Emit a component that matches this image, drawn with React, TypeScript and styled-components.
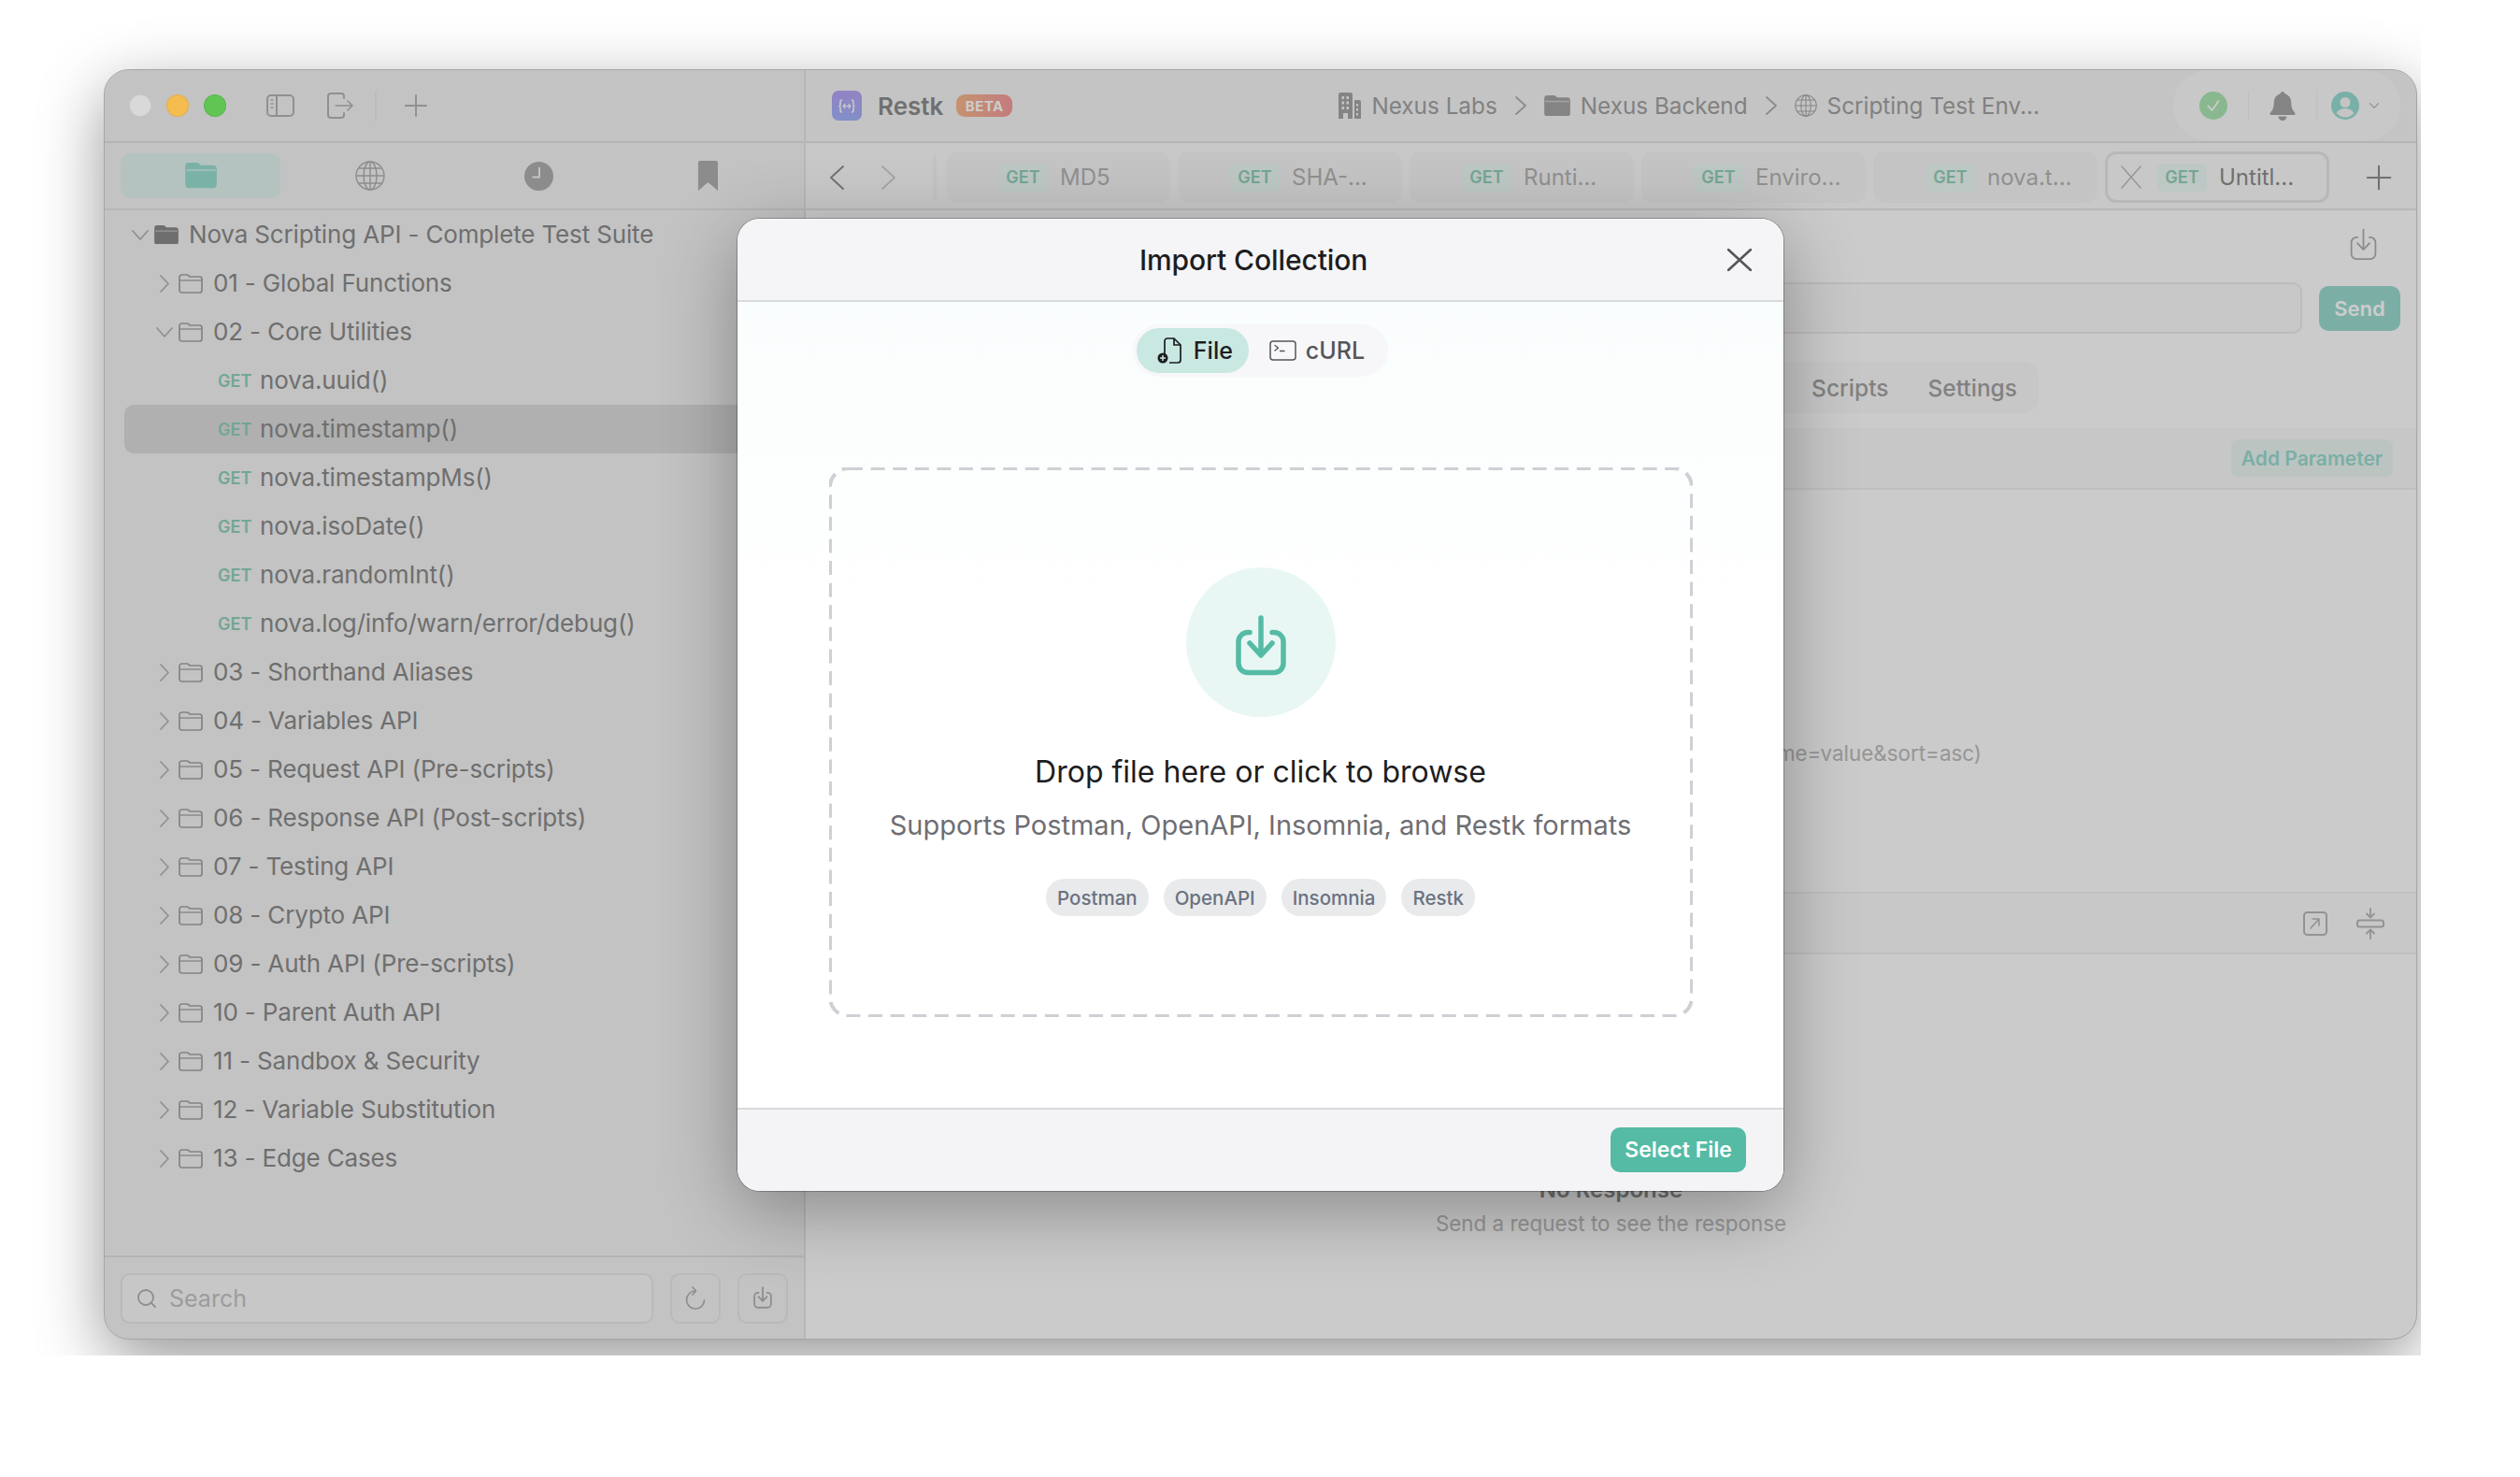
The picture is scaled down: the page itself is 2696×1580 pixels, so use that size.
import styled, { createGlobalStyle } from "styled-components";
import { ChevronDown, Plus, Search } from "lucide-react";

const GlobalStyle = createGlobalStyle`
  html, body {
    margin: 0;
    background: #fff;
  }
  * {
    box-sizing: border-box;
  }
  body {
    font-family: Inter, "Noto Sans", sans-serif;
    -webkit-font-smoothing: antialiased;
  }
`;

type IconProps = { size?: number };
type GlyphProps = { w: number; h: number; weight?: number };

const ChevronGlyph = ({ w, h, weight = 1.8, dir }: GlyphProps & { dir: "left" | "right" | "down" }) => {
  const d =
    dir === "left"
      ? `M${w - 1} 1L1 ${h / 2}L${w - 1} ${h - 1}`
      : dir === "right"
        ? `M1 1L${w - 1} ${h / 2}L1 ${h - 1}`
        : `M1 1L${w / 2} ${h - 1}L${w - 1} 1`;
  return (
    <svg width={w} height={h} viewBox={`0 0 ${w} ${h}`} fill="none" stroke="currentColor" strokeWidth={weight} strokeLinecap="round" strokeLinejoin="round">
      <path d={d} />
    </svg>
  );
};

const XGlyph = ({ w, h, weight = 2 }: GlyphProps) => (
  <svg width={w} height={h} viewBox={`0 0 ${w} ${h}`} fill="none" stroke="currentColor" strokeWidth={weight} strokeLinecap="round">
    <path d={`M1 1L${w - 1} ${h - 1}M${w - 1} 1L1 ${h - 1}`} />
  </svg>
);

const GlobeGlyph = ({ size = 32 }: IconProps) => (
  <svg width={size} height={size} viewBox="0 0 32 32" fill="none" stroke="currentColor" strokeWidth="1.4">
    <circle cx="16" cy="16" r="15" />
    <ellipse cx="16" cy="16" rx="7" ry="15" />
    <path d="M16 1v30M1 16h30M3.500 8h25M3.500 24h25" />
  </svg>
);

const SidebarIcon = () => (
  <svg width="30" height="24" viewBox="0 0 30 24" fill="none" stroke="currentColor" strokeWidth="2">
    <rect x="1" y="1" width="28" height="22" rx="4" />
    <path d="M11 1v22" />
    <path d="M4.500 6h3M4.500 10h3M4.500 14h3" strokeWidth="1.500" />
  </svg>
);

const ExitIcon = () => (
  <svg width="30" height="28" viewBox="0 0 30 28" fill="none" stroke="currentColor" strokeWidth="2" strokeLinecap="round" strokeLinejoin="round">
    <path d="M19 6V4a3 3 0 0 0-3-3H5a3 3 0 0 0-3 3v20a3 3 0 0 0 3 3h11a3 3 0 0 0 3-3v-2" />
    <path d="M10 14h18M23 9l5 5-5 5" strokeWidth="1.600" />
  </svg>
);

const FolderFill = ({ size = 26 }: IconProps) => (
  <svg width={size} height={size * 0.8} viewBox="0 0 26 21" fill="currentColor">
    <path d="M3 0h6.500c1 0 1.600.4 2.200 1l1.200 1.200H23a3 3 0 0 1 3 3V18a3 3 0 0 1-3 3H3a3 3 0 0 1-3-3V3a3 3 0 0 1 3-3z" />
    <path d="M1 6.200h24" stroke="#fff" strokeOpacity=".45" strokeWidth="1.400" />
  </svg>
);

const FolderLine = () => (
  <svg width="26" height="21" viewBox="0 0 26 21" fill="none" stroke="currentColor" strokeWidth="1.700" strokeLinejoin="round">
    <path d="M3.500 1h5.600c.8 0 1.300.3 1.800.8l1 1.200h10.600A2.500 2.500 0 0 1 25 5.500v12a2.500 2.500 0 0 1-2.500 2.500h-19A2.500 2.500 0 0 1 1 17.500v-14A2.500 2.500 0 0 1 3.500 1z" />
    <path d="M1.500 7h23" strokeWidth="1.300" />
  </svg>
);

const ClockFill = () => (
  <svg width="31" height="31" viewBox="0 0 31 31">
    <circle cx="15.500" cy="15.500" r="15.500" fill="currentColor" />
    <path d="M16 6v10.500H8.500" fill="none" stroke="#f4f4f4" strokeWidth="2" />
  </svg>
);

const BookmarkFill = () => (
  <svg width="21" height="32" viewBox="0 0 21 32" fill="currentColor">
    <path d="M2 0h17a2 2 0 0 1 2 2v30l-10.500-9L0 32V2a2 2 0 0 1 2-2z" />
  </svg>
);

const BuildingIcon = () => (
  <svg width="24" height="28" viewBox="0 0 24 28" fill="currentColor">
    <path fillRule="evenodd" d="M2 0h11a2 2 0 0 1 2 2v26H0V2a2 2 0 0 1 2-2zm1.500 4v3H6V4zm5 0v3H11V4zm-5 5.500v3H6v-3zm5 0v3H11v-3zm-5 5.500v3H6v-3zm5 0v3H11v-3zM5 22v6h5v-6z" />
    <path fillRule="evenodd" d="M17 8h5a2 2 0 0 1 2 2v18h-7zm2 4v2.500h2V12zm0 5v2.500h2V17zm0 5v2.500h2V22z" />
  </svg>
);

const ImportIcon = ({ size = 30, weight = 2 }: IconProps & { weight?: number }) => (
  <svg width={size} height={(size * 65) / 54} viewBox="0 0 54 65" fill="none" stroke="currentColor" strokeWidth={weight * (54 / size)} strokeLinecap="round" strokeLinejoin="round">
    <path d="M15 18.500h-2a10 10 0 0 0-10 10v23a10 10 0 0 0 10 10h28a10 10 0 0 0 10-10v-23a10 10 0 0 0-10-10h-2" />
    <path d="M27 3v40M15 30l12 13 12-13" />
  </svg>
);

const RefreshIcon = () => (
  <svg width="22" height="26" viewBox="0 0 22 26" fill="none" stroke="currentColor" strokeWidth="1.700" strokeLinecap="round" strokeLinejoin="round">
    <path d="M11 5A9.500 9.500 0 1 0 20.500 15" />
    <path d="M8 1l3.500 4L8 9" />
  </svg>
);

const FileIcon = () => (
  <svg width="26" height="28" viewBox="0 0 26 28" fill="none" stroke="currentColor" strokeWidth="1.700" strokeLinejoin="round">
    <path d="M8 18V4a3 3 0 0 1 3-3h7l7 7v16a3 3 0 0 1-3 3H13" />
    <path d="M18 1v7h7" />
    <circle cx="6" cy="22" r="5.500" fill="currentColor" stroke="none" />
    <path d="M6 19v6M3 22h6" stroke="#c9e8e2" strokeWidth="1.500" />
  </svg>
);

const TerminalIcon = () => (
  <svg width="29" height="22" viewBox="0 0 29 22" fill="none" stroke="currentColor" strokeWidth="1.500" strokeLinejoin="round">
    <rect x="1" y="1" width="27" height="20" rx="3" />
    <path d="M6 5.500l3.500 2.700L6 11M11.500 11.500H16" strokeWidth="1.300" strokeLinecap="round" />
  </svg>
);

const PopOutIcon = () => (
  <svg width="26" height="26" viewBox="0 0 26 26" fill="none" stroke="currentColor" strokeWidth="2" strokeLinecap="round" strokeLinejoin="round">
    <rect x="1" y="1" width="24" height="24" rx="3.500" />
    <path d="M8 18l9-10M10 8h7v7" strokeWidth="1.600" />
  </svg>
);

const CollapseIcon = () => (
  <svg width="30" height="34" viewBox="0 0 30 34" fill="none" stroke="currentColor" strokeWidth="1.800" strokeLinecap="round" strokeLinejoin="round">
    <rect x="1" y="13.500" width="28" height="7" rx="2.500" strokeWidth="2" />
    <path d="M15 1v9M11 6.500l4 4 4-4M15 33v-9M11 27.500l4-4 4 4" />
  </svg>
);

const BellFill = () => (
  <svg width="28" height="31" viewBox="0 0 28 31" fill="currentColor">
    <path d="M14 0c1.300 0 2.200 1 2.300 2.300C21 3.500 23.300 7.500 23.300 12c0 6 1.700 8 3.800 10.500.9 1 .4 2.500-1 2.500H1.900c-1.400 0-1.900-1.500-1-2.500C3 20 4.700 18 4.700 12c0-4.500 2.300-8.500 7-9.700C11.800 1 12.700 0 14 0z" />
    <path d="M9.500 26.500h9a4.500 4.500 0 0 1-9 0z" />
  </svg>
);

const CheckBadge = () => (
  <svg width="30" height="30" viewBox="0 0 30 30">
    <circle cx="15" cy="15" r="15" fill="#acE6b3" />
    <path d="M9.500 15.500l4 4.500 7-10" fill="none" stroke="#fff" strokeWidth="1.800" strokeLinecap="round" strokeLinejoin="round" />
  </svg>
);

const UserBadge = () => (
  <svg width="30" height="30" viewBox="0 0 30 30">
    <circle cx="15" cy="15" r="15" fill="#96dcd2" />
    <circle cx="15" cy="11.500" r="5.500" fill="#f5f5f5" />
    <path d="M5.500 23c2-3.600 5.500-5 9.500-5s7.500 1.400 9.500 5c-2.400 2.700-5.800 4.500-9.500 4.500S7.900 25.700 5.500 23z" fill="#f5f5f5" />
  </svg>
);

const LogoMark = () => (
  <svg width="18" height="15" viewBox="0 0 18 15" fill="none" stroke="#fff" strokeWidth="1.500" strokeLinecap="round" strokeLinejoin="round">
    <path d="M3.500 1C2 1 2 2 2 3.500v2C2 6.800 1.500 7.500 1 7.500c.5 0 1 .7 1 2v2C2 13 2 14 3.500 14M14.500 1C16 1 16 2 16 3.500v2c0 1.300.5 2 1 2-.5 0-1 .7-1 2v2c0 1.500 0 2.500-1.500 2.500" />
    <path d="M5.500 7.500h7M7 5.500l-1.800 2L7 9.500M11 5.500l1.800 2-1.800 2" strokeWidth="1.200" />
  </svg>
);

const treeGroupsAfter = [
  "03 - Shorthand Aliases",
  "04 - Variables API",
  "05 - Request API (Pre-scripts)",
  "06 - Response API (Post-scripts)",
  "07 - Testing API",
  "08 - Crypto API",
  "09 - Auth API (Pre-scripts)",
  "10 - Parent Auth API",
  "11 - Sandbox & Security",
  "12 - Variable Substitution",
  "13 - Edge Cases",
];

const coreRequests = [
  "nova.uuid()",
  "nova.timestamp()",
  "nova.timestampMs()",
  "nova.isoDate()",
  "nova.randomInt()",
  "nova.log/info/warn/error/debug()",
];

const openTabs = ["MD5", "SHA-...", "Runti...", "Enviro...", "nova.t..."];

const App = () => (
  <>
    <GlobalStyle />
    <Page>
      <Shot>
        <Window>
          <Sidebar>
            <SideTitle>
              <Lights>
                <Light $color="#d9d9d9" />
                <Light $color="#f5bd4f" />
                <Light $color="#61c554" />
              </Lights>
              <SideTools>
                <SidebarIcon />
                <ExitIcon />
                <ToolDivider />
                <Plus size={38} strokeWidth={1.2} />
              </SideTools>
            </SideTitle>
            <SideTabs>
              <SideTab $active>
                <FolderFill size={34} />
              </SideTab>
              <SideTab>
                <GlobeGlyph />
              </SideTab>
              <SideTab>
                <ClockFill />
              </SideTab>
              <SideTab>
                <BookmarkFill />
              </SideTab>
            </SideTabs>
            <Tree>
              <Row $depth={0}>
                <Caret><ChevronGlyph dir="down" w={18} h={11} /></Caret>
                <RootFolder><FolderFill /></RootFolder>
                <RowLabel>Nova Scripting API - Complete Test Suite</RowLabel>
              </Row>
              <Row $depth={1}>
                <Caret><ChevronGlyph dir="right" w={10} h={19} /></Caret>
                <FolderLine />
                <RowLabel>01 - Global Functions</RowLabel>
              </Row>
              <Row $depth={1}>
                <Caret><ChevronGlyph dir="down" w={18} h={11} /></Caret>
                <FolderLine />
                <RowLabel>02 - Core Utilities</RowLabel>
              </Row>
              {coreRequests.map((name) => (
                <RequestRow key={name} $selected={name === "nova.timestamp()"}>
                  <Method>GET</Method>
                  <RowLabel>{name}</RowLabel>
                </RequestRow>
              ))}
              {treeGroupsAfter.map((name) => (
                <Row key={name} $depth={1}>
                  <Caret><ChevronGlyph dir="right" w={10} h={19} /></Caret>
                  <FolderLine />
                  <RowLabel>{name}</RowLabel>
                </Row>
              ))}
            </Tree>
            <SideFooter>
              <SearchBox>
                <Search size={24} strokeWidth={1.8} />
                <span>Search</span>
              </SearchBox>
              <SquareButton><RefreshIcon /></SquareButton>
              <SquareButton><ImportIcon size={20} weight={1.8} /></SquareButton>
            </SideFooter>
          </Sidebar>

          <Main>
            <TitleBar>
              <Logo><LogoMark /></Logo>
              <Brand>Restk</Brand>
              <BetaBadge>BETA</BetaBadge>
              <Crumbs>
                <BuildingIcon />
                <Crumb>Nexus Labs</Crumb>
                <CrumbSep><ChevronGlyph dir="right" w={12} h={20} /></CrumbSep>
                <FolderFill size={28} />
                <Crumb>Nexus Backend</Crumb>
                <CrumbSep><ChevronGlyph dir="right" w={12} h={20} /></CrumbSep>
                <GlobeGlyph size={24} />
                <Crumb>Scripting Test Env...</Crumb>
              </Crumbs>
              <StatusPill>
                <CheckBadge />
                <PillDivider />
                <BellIcon><BellFill /></BellIcon>
                <PillDivider />
                <UserSlot>
                  <UserBadge />
                  <ChevronDown size={18} strokeWidth={1.6} />
                </UserSlot>
              </StatusPill>
            </TitleBar>

            <TabBar>
              <NavButton><ChevronGlyph dir="left" w={15} h={26} /></NavButton>
              <NavButton $muted><ChevronGlyph dir="right" w={15} h={26} /></NavButton>
              <TabEdge />
              <Tabs>
                {openTabs.map((name) => (
                  <Tab key={name}>
                    <TabClose />
                    <TabMethod>GET</TabMethod>
                    <TabName>{name}</TabName>
                  </Tab>
                ))}
                <Tab $active>
                  <TabClose><XGlyph w={22} h={25} weight={1.5} /></TabClose>
                  <TabMethod>GET</TabMethod>
                  <TabName $active>Untitl...</TabName>
                </Tab>
              </Tabs>
              <AddTab><Plus size={42} strokeWidth={1.2} /></AddTab>
            </TabBar>

            <RequestTools>
              <ImportIcon size={29} weight={1.8} />
            </RequestTools>
            <UrlRow>
              <UrlInput />
              <SendButton>Send</SendButton>
            </UrlRow>
            <SectionTabs>
              <SectionTab>Scripts</SectionTab>
              <SectionTab>Settings</SectionTab>
            </SectionTabs>
            <ParamsHeader>
              <AddButton>Add Parameter</AddButton>
            </ParamsHeader>
            <ParamsEmpty>
              <HintLine>me=value&amp;sort=asc)</HintLine>
            </ParamsEmpty>
            <ResponseHeader>
              <PopOutIcon />
              <CollapseIcon />
            </ResponseHeader>
            <ResponseEmpty>
              <EmptyTitle>No Response</EmptyTitle>
              <HintLine>Send a request to see the response</HintLine>
            </ResponseEmpty>
          </Main>

          <Scrim>
            <Modal>
              <ModalHeader>
                <ModalTitle>Import Collection</ModalTitle>
                <CloseButton><XGlyph w={26} h={24} weight={2.6} /></CloseButton>
              </ModalHeader>
              <ModalBody>
                <Segment>
                  <SegmentItem $active>
                    <FileIcon />
                    File
                  </SegmentItem>
                  <SegmentItem>
                    <TerminalIcon />
                    cURL
                  </SegmentItem>
                </Segment>
                <DropZone>
                  <DashOutline viewBox="0 0 924 588" aria-hidden="true">
                    <rect x="1" y="1" width="922" height="586" rx="20" />
                  </DashOutline>
                  <DropCircle><ImportIcon size={54} weight={5.5} /></DropCircle>
                  <DropTitle>Drop file here or click to browse</DropTitle>
                  <DropHint>Supports Postman, OpenAPI, Insomnia, and Restk formats</DropHint>
                  <Formats>
                    <Format>Postman</Format>
                    <Format>OpenAPI</Format>
                    <Format>Insomnia</Format>
                    <Format>Restk</Format>
                  </Formats>
                </DropZone>
              </ModalBody>
              <ModalFooter>
                <SelectButton>Select File</SelectButton>
              </ModalFooter>
            </Modal>
          </Scrim>
        </Window>
      </Shot>
    </Page>
  </>
);

const Page = styled.div`
  width: 2696px;
  height: 1580px;
  overflow: hidden;
  background: #fff;
`;

const Shot = styled.div`
  width: 2590px;
  height: 1450px;
  padding: 75px 5px 18px 112px;
  overflow: hidden;
  display: flex;
`;

const Window = styled.div`
  position: relative;
  flex: 1;
  display: grid;
  grid-template-columns: 750px 1fr;
  border-radius: 26px;
  overflow: hidden;
  background: #fefefe;
  outline: 1px solid #a6a6a6;
  box-shadow: 0 22px 70px rgba(0, 0, 0, 0.42);
`;

const Sidebar = styled.aside`
  display: flex;
  flex-direction: column;
  background: #f4f4f4;
  border-right: 2px solid #e5e5e5;
  min-height: 0;
`;

const SideTitle = styled.div`
  height: 78px;
  flex: none;
  display: flex;
  align-items: center;
  padding: 0 0 0 26px;
  border-bottom: 2px solid #e2e2e2;
`;

const Lights = styled.div`
  position: relative;
  z-index: 11;
  display: flex;
  gap: 16px;
`;

const Light = styled.span<{ $color: string }>`
  width: 24px;
  height: 24px;
  border-radius: 50%;
  background: ${(p) => p.$color};
  box-shadow: inset 0 0 0 1px rgba(0, 0, 0, 0.08);
`;

const SideTools = styled.div`
  display: flex;
  align-items: center;
  gap: 34px;
  margin-left: 43px;
  color: #b4b4b4;
`;

const ToolDivider = styled.span`
  width: 2px;
  height: 32px;
  margin: 0 -11px 0 -12px;
  background: #ebebeb;
`;

const SideTabs = styled.div`
  height: 72px;
  flex: none;
  display: grid;
  grid-template-columns: repeat(4, 171px);
  gap: 10px;
  align-items: center;
  padding: 0 17px;
  border-bottom: 2px solid #e5e5e5;
`;

const SideTab = styled.div<{ $active?: boolean }>`
  height: 48px;
  display: flex;
  align-items: center;
  justify-content: center;
  border-radius: 10px;
  background: ${(p) => (p.$active ? "#e3f4f0" : "transparent")};
  color: ${(p) => (p.$active ? "#9adfd2" : "#b0b0b0")};
`;

const Tree = styled.div`
  flex: 1;
  min-height: 0;
  padding: 0 21px;
`;

const Row = styled.div<{ $depth: number }>`
  height: 52px;
  display: flex;
  align-items: center;
  padding-left: ${(p) => p.$depth * 26 + 8}px;
  gap: 8px;
  color: #a4a4a4;
`;

const RequestRow = styled.div<{ $selected?: boolean }>`
  height: 52px;
  display: flex;
  align-items: center;
  padding-left: 100px;
  border-radius: 10px;
  background: ${(p) => (p.$selected ? "#dcdcdc" : "transparent")};
`;

const Caret = styled.span`
  width: 18px;
  margin-right: -2px;
  display: flex;
  justify-content: center;
  color: #b6b6b6;
`;

const RootFolder = styled.span`
  display: flex;
  color: #8a8a8a;
`;

const RowLabel = styled.span`
  font-size: 26px;
  line-height: 32px;
  letter-spacing: -0.15px;
  color: #8b8b8b;
  margin-left: 3px;
  white-space: nowrap;
`;

const Method = styled.span`
  width: 42px;
  font-size: 18px;
  font-weight: 600;
  color: #8fd0b9;
`;

const SideFooter = styled.div`
  height: 89px;
  flex: none;
  display: flex;
  align-items: center;
  gap: 18px;
  padding: 0 17px;
  border-top: 2px solid #e2e2e2;
`;

const SearchBox = styled.div`
  flex: 1;
  height: 54px;
  display: flex;
  align-items: center;
  gap: 12px;
  padding-left: 14px;
  border: 2px solid #e8e8e8;
  border-radius: 10px;
  background: #f9f9f9;
  color: #b2b2b2;
  font-size: 25px;
  span {
    color: #c4c4c4;
  }
`;

const SquareButton = styled.div`
  width: 54px;
  height: 54px;
  display: flex;
  align-items: center;
  justify-content: center;
  border: 2px solid #e8e8e8;
  border-radius: 10px;
  color: #b2b2b2;
`;

const Main = styled.main`
  display: flex;
  flex-direction: column;
  min-width: 0;
  min-height: 0;
`;

const TitleBar = styled.div`
  height: 78px;
  flex: none;
  display: flex;
  align-items: center;
  padding: 0 17px 0 28px;
  background: #f5f5f5;
  border-bottom: 2px solid #e2e2e2;
`;

const Logo = styled.span`
  width: 32px;
  height: 32px;
  display: flex;
  align-items: center;
  justify-content: center;
  border-radius: 7px;
  background: linear-gradient(180deg, #b9a4f5, #a2b4fb);
`;

const Brand = styled.span`
  margin-left: 17px;
  font-size: 26px;
  font-weight: 600;
  color: #8c8c8c;
`;

const BetaBadge = styled.span`
  margin-left: 14px;
  width: 60px;
  height: 24px;
  display: flex;
  align-items: center;
  justify-content: center;
  border-radius: 9px;
  background: linear-gradient(90deg, #f7b88a, #f59a9f);
  color: #fff;
  font-size: 15px;
  font-weight: 700;
  letter-spacing: 0.5px;
`;

const Crumbs = styled.div`
  display: flex;
  align-items: center;
  gap: 11px;
  margin: 0 143px 0 auto;
  color: #a6a6a6;
`;

const Crumb = styled.span`
  font-size: 24.3px;
  color: #a2a2a2;
  white-space: nowrap;
`;

const CrumbSep = styled.span`
  display: flex;
  margin: 0 8px;
  color: #b0b0b0;
`;

const StatusPill = styled.div`
  width: 243px;
  height: 76px;
  display: flex;
  align-items: center;
  gap: 22px;
  padding-left: 28px;
  border-radius: 38px;
  background: #fbfbfb;
  color: #b8b8b8;
`;

const PillDivider = styled.span`
  width: 1px;
  height: 32px;
  background: #efefef;
`;

const BellIcon = styled.span`
  display: flex;
  color: #a6a6a6;
`;

const UserSlot = styled.span`
  display: flex;
  align-items: center;
  gap: 7px;
  margin-left: -7px;
`;

const TabBar = styled.div`
  height: 72px;
  flex: none;
  display: flex;
  align-items: center;
  padding: 3px 0 0 6px;
  background: #fbfbfb;
  border-bottom: 2px solid #e6e6e6;
`;

const NavButton = styled.span<{ $muted?: boolean }>`
  width: 55px;
  display: flex;
  justify-content: center;
  color: ${(p) => (p.$muted ? "#cfcfcf" : "#8c8c8c")};
`;

const TabEdge = styled.span`
  width: 4px;
  height: 48px;
  margin: 0 10px 0 20px;
  background: #f4f4f4;
`;

const Tabs = styled.div`
  display: flex;
  gap: 8px;
`;

const Tab = styled.div<{ $active?: boolean }>`
  width: 240px;
  height: 55px;
  display: flex;
  align-items: center;
  padding-left: 14px;
  border-radius: 12px;
  background: ${(p) => (p.$active ? "#fbfbfb" : "#f6f6f6")};
  box-shadow: ${(p) => (p.$active ? "inset 0 0 0 3px #e6e6e6" : "none")};
`;

const TabClose = styled.span`
  width: 42px;
  padding-left: 3px;
  display: flex;
  color: #bcbcbc;
`;

const TabMethod = styled.span`
  width: 53px;
  height: 30px;
  display: flex;
  align-items: center;
  justify-content: center;
  border-radius: 5px;
  background: #edf9f4;
  color: #8fd0b9;
  font-size: 18px;
  font-weight: 600;
`;

const TabName = styled.span<{ $active?: boolean }>`
  margin-left: 13px;
  font-size: 24px;
  color: ${(p) => (p.$active ? "#8c8c8c" : "#b4b4b4")};
  white-space: nowrap;
`;

const AddTab = styled.span`
  display: flex;
  margin-left: 32px;
  color: #8e8e8e;
`;

const RequestTools = styled.div`
  height: 72px;
  flex: none;
  display: flex;
  align-items: center;
  justify-content: flex-end;
  padding-right: 42px;
  color: #b0b0b0;
`;

const UrlRow = styled.div`
  height: 55px;
  flex: none;
  margin-top: 5px;
  display: flex;
  align-items: center;
  gap: 18px;
  padding: 0 17px 0 30px;
`;

const UrlInput = styled.div`
  flex: 1;
  height: 55px;
  border: 2px solid #ececec;
  border-radius: 10px;
  background: #fbfbfb;
`;

const SendButton = styled.div`
  width: 87px;
  height: 48px;
  display: flex;
  align-items: center;
  justify-content: center;
  border-radius: 10px;
  background: #9adbcf;
  color: #fff;
  font-size: 22px;
  font-weight: 600;
`;

const SectionTabs = styled.div`
  height: 55px;
  flex: none;
  width: 1289px;
  margin: 30px 0 0 30px;
  display: flex;
  align-items: center;
  justify-content: flex-end;
  gap: 42px;
  padding-right: 23px;
  border-radius: 16px;
  background: #f9f9f9;
`;

const SectionTab = styled.span`
  font-size: 24.5px;
  font-weight: 500;
  color: #a2a2a2;
`;

const ParamsHeader = styled.div`
  height: 66px;
  flex: none;
  margin-top: 16px;
  display: flex;
  align-items: center;
  justify-content: flex-end;
  padding-right: 25px;
  background: #f9f9f9;
  border-bottom: 2px solid #efefef;
`;

const AddButton = styled.div`
  width: 173px;
  height: 40px;
  display: flex;
  align-items: center;
  justify-content: center;
  border-radius: 7px;
  background: #ecf6f3;
  color: #9adbcf;
  font-size: 21px;
  font-weight: 600;
`;

/* only the tail of this line shows beside the dialog */
const ParamsEmpty = styled.div`
  flex: 1;
  display: flex;
  align-items: flex-end;
  justify-content: flex-end;
  padding: 0 465px 135px 0;
`;

const EmptyTitle = styled.div`
  font-size: 24px;
  font-weight: 600;
  color: #8c8c8c;
`;

const HintLine = styled.div`
  font-size: 22.4px;
  color: #bcbcbc;
  white-space: nowrap;
`;

const ResponseHeader = styled.div`
  height: 67px;
  flex: none;
  display: flex;
  align-items: center;
  justify-content: flex-end;
  gap: 31px;
  padding-right: 34px;
  background: #fafafa;
  border-top: 2px solid #f0f0f0;
  border-bottom: 2px solid #efefef;
  color: #b8b8b8;
`;

const ResponseEmpty = styled.div`
  height: 411px;
  flex: none;
  display: flex;
  flex-direction: column;
  align-items: center;
  gap: 8px;
  padding-top: 237px;
`;

const Scrim = styled.div`
  position: absolute;
  inset: 0;
  z-index: 10;
  display: flex;
  align-items: center;
  justify-content: center;
  background: rgba(0, 0, 0, 0.2);
`;

const Modal = styled.div`
  width: 1119px;
  height: 1040px;
  display: flex;
  flex-direction: column;
  border-radius: 24px;
  overflow: hidden;
  background: #fff;
  box-shadow: 0 20px 80px rgba(0, 0, 0, 0.32), 0 0 0 1px rgba(0, 0, 0, 0.25);
`;

const ModalHeader = styled.header`
  height: 89px;
  flex: none;
  display: flex;
  align-items: center;
  justify-content: space-between;
  padding: 2px 34px 0 430px;
  background: #f5f5f7;
  border-bottom: 2px solid #d9d9dc;
`;

const ModalTitle = styled.h2`
  margin: 0;
  font-size: 30px;
  font-weight: 500;
  letter-spacing: -0.1px;
  color: #1d1d1f;
`;

const CloseButton = styled.span`
  display: flex;
  color: #55555a;
`;

const ModalBody = styled.div`
  flex: 1;
  display: flex;
  flex-direction: column;
  align-items: center;
  padding-top: 24px;
  background: linear-gradient(180deg, #fafdfd, #fff 40%);
`;

const Segment = styled.div`
  height: 56px;
  display: flex;
  align-items: center;
  padding: 0 25px 0 4px;
  gap: 22px;
  border-radius: 28px;
  background: #f7f7f9;
`;

const SegmentItem = styled.div<{ $active?: boolean }>`
  height: 48px;
  width: ${(p) => (p.$active ? "120px" : "auto")};
  display: flex;
  align-items: center;
  gap: ${(p) => (p.$active ? "13px" : "10px")};
  padding-left: ${(p) => (p.$active ? "22px" : "0")};
  border-radius: 24px;
  background: ${(p) => (p.$active ? "#c9e8e2" : "transparent")};
  color: ${(p) => (p.$active ? "#1d1d1f" : "#55555a")};
  font-size: 25px;
  font-weight: 500;
`;

const DropZone = styled.div`
  position: relative;
  width: 924px;
  height: 588px;
  margin-top: 97px;
  display: flex;
  flex-direction: column;
  align-items: center;
  justify-content: center;
`;

const DashOutline = styled.svg`
  position: absolute;
  inset: 0;
  width: 100%;
  height: 100%;
  rect {
    fill: none;
    stroke: #cfcfd5;
    stroke-width: 4;
    stroke-dasharray: 15 8.6;
  }
`;

const DropCircle = styled.div`
  width: 160px;
  height: 160px;
  display: flex;
  align-items: center;
  justify-content: center;
  padding-top: 7px;
  border-radius: 50%;
  background: #e8f7f4;
  color: #55bba5;
`;

const DropTitle = styled.div`
  margin-top: 37px;
  font-size: 32px;
  font-weight: 400;
  line-height: 44px;
  color: #1d1d1f;
`;

const DropHint = styled.div`
  margin-top: 15px;
  font-size: 29px;
  line-height: 40px;
  color: #6e6e73;
`;

const Formats = styled.div`
  margin-top: 37px;
  display: flex;
  gap: 16px;
`;

const Format = styled.span`
  height: 40px;
  display: flex;
  align-items: center;
  padding: 0 12px;
  border-radius: 20px;
  background: #e8eaec;
  color: #6b7280;
  font-size: 20.5px;
  font-weight: 500;
`;

const ModalFooter = styled.footer`
  height: 89px;
  flex: none;
  display: flex;
  align-items: center;
  justify-content: flex-end;
  padding-right: 40px;
  background: #f4f4f6;
  border-top: 2px solid #d9d9dc;
`;

const SelectButton = styled.div`
  width: 145px;
  height: 48px;
  display: flex;
  align-items: center;
  justify-content: center;
  border-radius: 10px;
  background: #55bba5;
  color: #fff;
  font-size: 23px;
  font-weight: 600;
`;

export default App;
